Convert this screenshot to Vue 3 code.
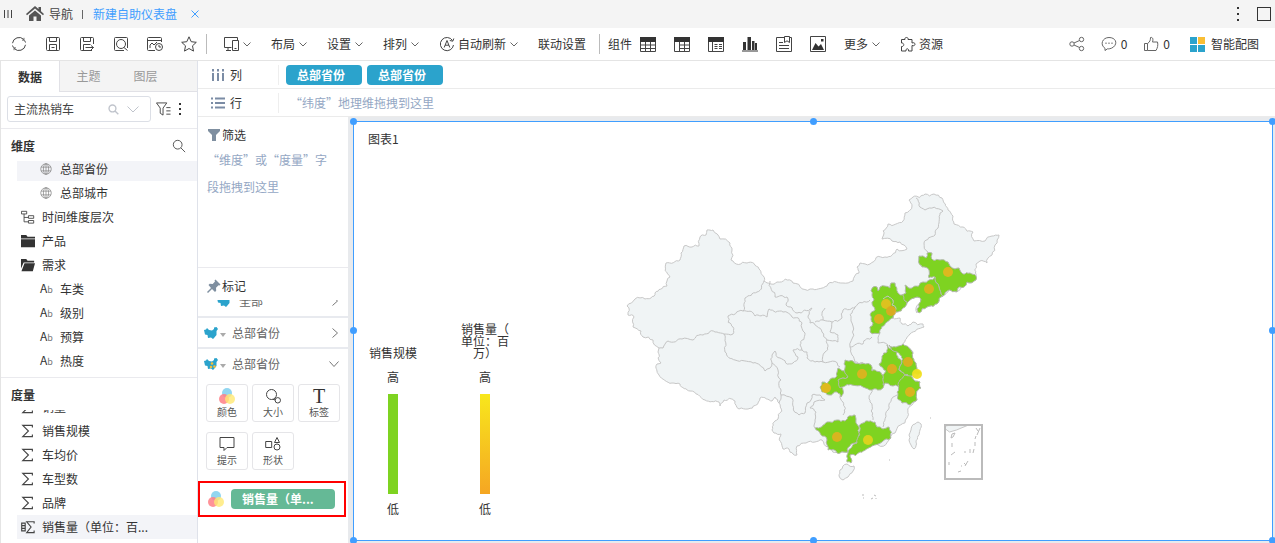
<script setup>
import { ref } from 'vue'

const dataset = ref('主流热销车')

const icons = {
  refresh: '<path d="M1.500 7.200A6.600 6.600 0 0 1 12.800 3.500M14.500 8.800A6.600 6.600 0 0 1 3.200 12.500M14.500 6.500L13.500 4.300M1.500 9.500L2.500 11.700"/><path d="M13 1.800v2.400h-2M3 14.200v-2.400h2" stroke-width=".7"/>',
  save: '<path d="M1.500 2.500a1 1 0 0 1 1-1h11a1 1 0 0 1 1 1v11a1 1 0 0 1-1 1h-11a1 1 0 0 1-1-1zM4.500 1.500v4h7v-4M4.500 14.500v-6h7v6M6.500 11.500h3"/>',
  saveAs: '<path d="M14.500 8V2.500a1 1 0 0 0-1-1h-11a1 1 0 0 0-1 1v11a1 1 0 0 0 1 1H13M4.500 1.500v4h7v-4M4.500 14.500v-6h7M6.500 11.500h8M12 9.500l2.500 2-2.500 2.500"/>',
  preview: '<path d="M11 14.500H2.500a1 1 0 0 1-1-1v-11a1 1 0 0 1 1-1h11a1 1 0 0 1 1 1V12"/><circle cx="8" cy="8" r="4.500"/><path d="M11 11.500l3.500 3"/>',
  history: '<path d="M14.500 6V2.500a1 1 0 0 0-1-1h-12a1 1 0 0 0-1 1v11a1 1 0 0 0 1 1H8M.5 4.500h14M3 12V9l2-2 2 2 3-3"/><circle cx="12" cy="11" r="3.500"/><path d="M12 9v2h2"/>',
  star: '<path d="M8 .8l2.200 4.900 5.100.6-3.800 3.500 1 5.300L8 12.500l-4.500 2.600 1-5.300L.7 6.300l5.100-.6z"/>',
  device: '<path d="M14.500 4V1.500h-13v10h7M3 14.500h5M5 11.500v3"/><path d="M9.500 4.500h6v10h-6zM11.500 12.500h2"/>',
  auto: '<path d="M13.500 4.500A6.600 6.600 0 1 0 14.500 9M14.800 2.500l-1 2.700-3-.7M5.200 11.500L8 4.500l2.800 7M6.200 9.200h3.600"/>',
  table: '<path d="M.5 1.500h15v14H.5zM.5 12.500h15M.5 9h15M5.500 5v10.500M10.500 5v10.500"/><path class="solid" d="M0 1h16v5H0z"/>',
  pivot: '<path d="M.5 1.500h15v14H.5zM5.500 9h10M5.500 12.500h10M5.500 5v10.500M10.500 5v10.500"/><path class="solid" d="M0 1h16v5H0z"/>',
  detail: '<path d="M.5 1.500h15v14H.5zM4.500 5v10.500M6.500 8.500h3M11 8.500h3M6.500 10.500h3M11 10.500h3M6.500 12.500h3M11 12.500h3"/><path class="solid" d="M0 1h16v5H0z"/>',
  bars: '<path class="solid" d="M1 6h3v8H1zM5.500 1h3.500v13H5.500zM10 5h2.500v9H10zM13 7h2v7h-2zM0 14.500h16v1H0z"/>',
  note: '<path d="M8 1.500H.5v14h15v-14H14M3 6.500h4M3 9.500h10M3 12.500h10M8.500.5h5v6L11 4.800 8.500 6.500z"/>',
  image: '<path d="M.5.500h15v15H.5z"/><path class="solid" d="M2 14l3.500-7 3 3.500L11 8l3 6zM11 3h2.500v2.500H11z"/>',
  puzzle: '<path d="M1.500 3.500H5C4 .8 9 .8 8 3.500h4V7c4-1.600 4 4 0 2.500v5.500H8.500c.6-3-3-3-2.500 0H1.500v-4.500c3 .4 3-3.900 0-3.500z"/>',
  share: '<circle cx="3" cy="8" r="2.200"/><circle cx="12.500" cy="3.500" r="2.200"/><circle cx="12.500" cy="12.500" r="2.200"/><path d="M5 7l5.500-2.500M5 9l5.500 2.500"/>',
  comment: '<path d="M4 14.500v-2.200C-1.500 8.500 1.500 1.500 8 1.500s9 5.500 4.500 9.500C10 13 7 13 6.500 12.800z"/><path d="M4.500 7.200h1M7.500 7.200h1M10.500 7.200h1" stroke-width="1.500"/>',
  thumb: '<path d="M1.500 7.500h3v7h-3zM4.500 7.500C7 6 7.500 4 7.500 1.500c2.500-.6 2.800 2 2 4.500h5c.8 3 0 6-1.500 8.500H4.500"/>',
  search: '<circle cx="6.500" cy="6.500" r="5"/><path d="M10.200 10.200l4.800 4.800"/>',
  funnelList: '<path d="M.5 1.500h11L7.500 7v7.500l-3-2V7zM11 6.500h4.500M11 10h4.500M11 13.500h4.500"/>',
  globe: '<circle cx="8" cy="8" r="7"/><ellipse cx="8" cy="8" rx="3.500" ry="7"/><path d="M1.500 5.500h13M1.500 10.500h13M8 1v14"/>',
  tree: '<path d="M.5 1.500h6v3h-6zM3.500 4.500v9h5M3.500 8.500h5M8.500 6.500h6v3h-6zM8.500 12h6v3h-6z"/>',
  folder: '<path class="solid" d="M0 1h6l1.500 2H16v2H0zM0 6h16v9H0z"/>',
  open: '<path class="solid" d="M0 1h6l1.500 2H15v2H3L0 12zM4 6h12l-2.500 9H.500z"/>',
  sigma: '<path d="M13 4V1.500h-11L8.500 8 2 14.500h11V12" stroke-width="1.300"/>',
  calc: '<path d="M15 4V2H6.500l5 6-5 6.500H15V12M.8 3.500h4v9h-4zM.8 6.500h4M.8 9.500h4" stroke-width="1.300"/>',
  size: '<circle cx="6.500" cy="6.500" r="5"/><circle cx="12.800" cy="12.300" r="2.700"/><path d="M8 11.300l2.500.7"/>',
  tooltip: '<path d="M1 1.500h14v10H8l-3 3v-3H1z"/>',
  shape: '<path d="M.7 5.500h6v6h-6zM12 1.500l2.500 5h-5z"/><circle cx="12" cy="11" r="3"/>'
}

const fileTools = [
  ['refresh', '刷新'], ['save', '保存'], ['saveAs', '另存'], ['preview', '预览'], ['history', '定时'], ['star', '收藏']
]
const menus = [
  { icon: 'device', caret: true, label: '' },
  { label: '布局', caret: true },
  { label: '设置', caret: true },
  { label: '排列', caret: true },
  { icon: 'auto', label: '自动刷新', caret: true },
  { label: '联动设置' }
]
const widgets = [
  ['table', '表格'], ['pivot', '交叉表'], ['detail', '明细表'], ['bars', '图表'], ['note', '文本'], ['image', '图片']
]
const dimensions = [
  { icon: 'globe', label: '总部省份', sub: true, active: true },
  { icon: 'globe', label: '总部城市', sub: true },
  { icon: 'tree', label: '时间维度层次' },
  { icon: 'folder', label: '产品' },
  { icon: 'open', label: '需求' },
  { label: '车类', sub: true },
  { label: '级别', sub: true },
  { label: '预算', sub: true },
  { label: '热度', sub: true }
]
const measures = [
  { icon: 'sigma', label: '销量' },
  { icon: 'sigma', label: '销售规模' },
  { icon: 'sigma', label: '车均价' },
  { icon: 'sigma', label: '车型数' },
  { icon: 'sigma', label: '品牌' },
  { icon: 'calc', label: '销售量（单位：百...', active: true }
]
const legends = [
  { title: '销售规模', kind: 'green' },
  { title: '销售量（单位：百万）', kind: 'warm' }
]
const handles = ['nw', 'n', 'ne', 'w', 'e', 'sw', 's', 'se']

/* Splits a border segment into small irregular steps; the result does not depend on the direction. */
function split(a, b, depth) {
  const len = Math.hypot(b[0] - a[0], b[1] - a[1])
  if (depth === 0 || len < 3) return [b]
  const [p, q] = a[0] < b[0] || (a[0] === b[0] && a[1] < b[1]) ? [a, b] : [b, a]
  const s = Math.sin(p[0] * 12.9 + p[1] * 78.2 + q[0] * 37.7 + q[1] * 9.1) * 4375.5
  const k = (s - Math.floor(s) - 0.5) * 0.42
  const m = [(p[0] + q[0]) / 2 - (q[1] - p[1]) * k, (p[1] + q[1]) / 2 + (q[0] - p[0]) * k]
  return [...split(a, m, depth - 1), ...split(m, b, depth - 1)]
}
function trace(text, close) {
  const pts = text.split(' ').map(p => p.split(',').map(Number))
  if (close) pts.push(pts[0])
  const out = [pts[0]]
  for (let i = 1; i < pts.length; i++) out.push(...split(pts[i - 1], pts[i], 3))
  return 'M' + out.map(p => p[0].toFixed(1) + ' ' + p[1].toFixed(1)).join('L') + (close ? 'Z' : '')
}

const land = [
  '764,281 759,269 747,263 731,260 732,250 730,243 720,239 713,230 707,230 706,235 700,237 699,246 692,247 684,246 681,253 680,260 666,263 670,277 667,286 655,293 645,299 635,299 627,306 628,315 634,317 633,327 641,331 643,337 653,340 659,348 658,352 661,363 657,364 659,375 672,383 680,384 690,391 705,400 719,402 720,406 724,400 735,401 739,409 748,409 760,398 772,401 775,397 779,403 778,419 772,430 774,433 781,434 783,449 789,449 793,454 797,455 797,446 806,443 815,442 822,440 828,447 840,453 848,452 860,450 870,445 889,440 891,436 895,433 907,418 912,405 917,400 921,388 920,382 912,377 921,373 916,365 913,353 903,344 910,334 924,327 923,324 913,322 908,326 902,324 900,318 893,318 896,313 903,308 907,303 917,297 921,299 916,308 917,313 927,307 938,303 943,296 949,289 958,291 967,282 973,282 976,276 976,264 980,261 987,263 992,255 995,245 999,235 992,236 985,241 974,241 973,232 963,227 954,224 948,210 942,198 934,194 925,194 913,197 909,200 912,206 905,213 903,221 888,224 882,239 892,241 900,242 904,245 907,249 897,249 885,257 870,264 860,263 857,267 859,273 853,281 843,283 827,286 813,289 793,283 777,282',
  '840,470 847,464 854,466 853,471 848,477 843,480 839,476',
  '915,424 918,422 921,424 920,430 918,436 916,442 914,449 911,445 909,440 909,435 911,430'
].map(t => trace(t, true))

const borders = [
  '659,348 663,348 668,341 682,339 693,340 703,335 717,332 724,334 733,334 733,327 728,316 743,311 745,298 757,292 764,281',
  '743,311 755,316 767,317 769,309 783,312 792,317 802,323 805,333 800,345 802,350 793,350 798,357 793,363 780,358 775,351 772,355 772,363',
  '724,334 725,352 735,360 753,363 765,371 772,363',
  '772,363 778,370 781,380 781,395 779,403',
  '802,350 807,352 807,358 815,362 823,362',
  '770,281 775,297 787,297 786,305 797,313 812,308 808,316 810,323 822,332 827,340 838,342 838,335 830,332 832,322 823,320 825,308',
  '815,322 823,320',
  '832,322 842,318 843,310 855,307 870,300',
  '855,307 852,323 850,347 863,344 872,337',
  '850,347 852,355 855,362 870,367 880,372',
  '827,340 825,352 823,362 840,367',
  '781,395 792,398 799,415 805,413 807,403 812,395 820,395 825,400 814,402 810,408 816,412 815,428',
  '843,388 843,402 843,415',
  '872,390 870,402 873,420',
  '897,395 888,410 883,427',
  '880,333 878,343 888,345',
  '916,198 925,210 943,211 939,223 935,235 924,243 928,252'
].map(t => trace(t, false))

const provinces = [
  '919,256 926,258 927,253 932,253 933,260 940,260 948,262 950,266 955,269 959,268 963,274 970,273 976,276 976,280 973,282 967,282 964,287 958,288 957,292 949,290 943,296 939,287 935,277 929,278 929,270 922,267',
  '935,277 939,287 943,296 938,303 927,307 919,313 917,309 921,299 917,297 907,303 902,295 906,293 905,285 912,288 923,282 929,280',
  '873,287 877,287 878,291 880,287 890,288 891,283 895,283 898,293 903,295 907,302 903,308 898,312 895,311 893,318 887,322 880,333 870,332 873,323 870,315 875,310 872,302 874,299 872,295',
  '822,382 827,384 832,378 837,376 838,368 847,370 848,377 838,380 843,390 841,397 837,392 829,395 822,392 820,387',
  '845,360 853,361 860,364 871,365 872,371 883,375 883,388 872,390 863,387 852,385 840,388 838,380 848,377 845,368',
  '887,345 891,349 897,352 898,358 902,362 899,370 905,375 903,387 893,386 883,385 883,375 886,371 879,364 882,356 887,352',
  '889,345 896,347 903,344 909,348 913,353 916,365 921,373 910,377 899,370 902,362 897,352',
  '905,375 912,377 920,382 921,388 917,400 910,405 902,403 897,392 900,380',
  '815,428 827,422 837,420 845,421 849,416 855,415 856,423 859,427 858,440 848,452 840,453 828,450 827,440',
  '863,423 875,422 877,427 889,427 891,438 882,442 872,446 860,452 850,455 851,463 847,462 847,455 857,443 859,426'
].map(t => trace(t, true))
const cityBorder = trace('883,299 888,296 893,300 892,305 896,308 895,315', false)

const points = [
  [948, 272, '#e3b71f'], [929, 289, '#dfb11f'], [886, 304, '#e3c11f'], [891, 311, '#dfa820'], [879, 319, '#dfb11f'],
  [908, 362, '#dfae20'], [892, 369, '#dfae20'], [917, 374, '#f2e01e'], [910, 392, '#dfb31f'], [862, 374, '#dfb31f'],
  [826, 388, '#e6b81f'], [837, 437, '#dfb31f'], [868, 440, '#e1d31d']
]
</script>

<template>
  <div class="app">
    <header class="tabs">
      <svg class="grip" viewBox="0 0 10 10"><path d="M1.500 1v8M5 1v8M8.500 1v8" /></svg>
      <a class="nav" href="#">
        <svg viewBox="0 0 18 16"><path d="M9 0L0 8l1 1.200L9 2.500l8 6.700L18 8l-3-2.700V1h-2.500v2zM3 9.500V15h4.500v-4.500h3V15H15V9.500L9 4.500z" /></svg>
        导航
      </a>
      <span class="bar" />
      <a class="current" href="#">新建自助仪表盘</a>
      <button class="close" aria-label="关闭"><svg viewBox="0 0 8 8"><path d="M.5.500l7 7M7.500.500l-7 7" /></svg></button>
      <button class="more" aria-label="更多操作"><i /><i /><i /></button>
      <button class="maximise" aria-label="最大化" />
    </header>

    <nav class="toolbar">
      <div class="tools">
        <button v-for="t in fileTools" :key="t[0]" :aria-label="t[1]"><svg class="ico" viewBox="0 0 16 16" v-html="icons[t[0]]" /></button>
      </div>
      <span class="sep" />
      <div class="menus">
        <button v-for="m in menus" :key="m.label" :aria-label="m.label || '设备'">
          <svg v-if="m.icon" class="ico" viewBox="0 0 16 16" v-html="icons[m.icon]" />
          <span v-if="m.label">{{ m.label }}</span>
          <svg v-if="m.caret" class="caret" viewBox="0 0 8 5"><path d="M.5.500L4 4 7.500.500" /></svg>
        </button>
      </div>
      <span class="sep" />
      <span class="caption">组件</span>
      <div class="tools">
        <button v-for="t in widgets" :key="t[0]" :aria-label="t[1]"><svg class="ico" viewBox="0 0 16 16" v-html="icons[t[0]]" /></button>
      </div>
      <div class="menus extra">
        <button><span>更多</span><svg class="caret" viewBox="0 0 8 5"><path d="M.5.500L4 4 7.500.500" /></svg></button>
        <button><svg class="ico" viewBox="0 0 16 16" v-html="icons.puzzle" /><span>资源</span></button>
      </div>
      <div class="social">
        <button aria-label="分享"><svg class="ico" viewBox="0 0 16 16" v-html="icons.share" /></button>
        <button><svg class="ico" viewBox="0 0 16 16" v-html="icons.comment" /><span>0</span></button>
        <button><svg class="ico" viewBox="0 0 16 16" v-html="icons.thumb" /><span>0</span></button>
      </div>
      <button class="smart"><span class="tiles"><i /><i /><i /><i /></span>智能配图</button>
    </nav>

    <div class="work">
      <aside class="data">
        <div class="switch">
          <button class="on">数据</button><button>主题</button><button>图层</button>
        </div>
        <div class="finder">
          <label class="box">
            <input v-model="dataset" type="text" aria-label="数据集">
            <svg class="lens" viewBox="0 0 16 16" v-html="icons.search" />
            <svg class="drop" viewBox="0 0 12 7"><path d="M.5.500L6 6 11.500.500" /></svg>
          </label>
          <button aria-label="筛选字段"><svg class="ico" viewBox="0 0 16 16" v-html="icons.funnelList" /></button>
          <button class="more" aria-label="更多"><i /><i /><i /></button>
        </div>
        <section class="fields dims">
          <h2>维度 <button aria-label="搜索"><svg class="ico" viewBox="0 0 16 16" v-html="icons.search" /></button></h2>
          <ul>
            <li v-for="d in dimensions" :key="d.label" :class="{ sub: d.sub, active: d.active }">
              <svg v-if="d.icon" :class="d.icon" viewBox="0 0 16 16" v-html="icons[d.icon]" />
              <span v-else class="ab">A<small>b</small></span>
              {{ d.label }}
            </li>
          </ul>
        </section>
        <section class="fields meas">
          <h2>度量</h2>
          <ul>
            <li v-for="d in measures" :key="d.label" :class="{ active: d.active }">
              <svg :class="d.icon" viewBox="0 0 16 16" v-html="icons[d.icon]" />
              {{ d.label }}
            </li>
          </ul>
        </section>
      </aside>

      <main class="board">
        <div class="shelf">
          <div class="name"><svg viewBox="0 0 14 12"><path d="M2 4v8M7 4v8M12 4v8M2 0v2.500M7 0v2.500M12 0v2.500" /></svg>列</div>
          <span class="chip">总部省份</span><span class="chip">总部省份</span>
        </div>
        <div class="shelf">
          <div class="name"><svg viewBox="0 0 14 12"><path d="M4 1.500h10M4 6h10M4 10.500h10M0 1.500h2M0 6h2M0 10.500h2" /></svg>行</div>
          <span class="hint">“纬度”地理维拖拽到这里</span>
        </div>
        <div class="stage">
          <div class="config">
            <section class="filter">
              <h3><svg viewBox="0 0 14 14"><path d="M1 1h12v2L9 7v6H5V7L1 3z" /></svg>筛选</h3>
              <p>“维度”或“度量”字段拖拽到这里</p>
            </section>
            <section class="marks">
              <h3><svg viewBox="0 0 14 14"><path d="M8.500.500l5 5-1 1-1-.3-2.500 2.500.2 3-1.200 1.200L5 10l-4 4-1-1 4-4L1.500 6l1.200-1.200 3 .2L8 2.500l-.5-1z" /></svg>标记</h3>
              <div class="clip">
                <div class="layer">
                  <svg class="cn" viewBox="0 0 14 12"><path d="M0 3l2-.5 1-1.500 2 2 3 .5 2-1.500V.500L12.500 0 14 2l-1.500 2v4L10 11l-1 1-2-1.500-3 .5L3.500 8 1 7.500z" /></svg>
                  <span>全部</span>
                  <svg class="arrow" viewBox="0 0 6 10"><path d="M.5.500L5.500 5 .5 9.500" /></svg>
                </div>
              </div>
              <div class="layer line">
                <svg class="cn" viewBox="0 0 14 12"><path d="M0 3l2-.5 1-1.500 2 2 3 .5 2-1.500V.500L12.500 0 14 2l-1.500 2v4L10 11l-1 1-2-1.500-3 .5L3.500 8 1 7.500z" /></svg>
                <i class="tri" /><span>总部省份</span>
                <svg class="arrow" viewBox="0 0 6 10"><path d="M.5.500L5.500 5 .5 9.500" /></svg>
              </div>
              <div class="layer line">
                <svg class="cn" viewBox="0 0 14 12"><path d="M0 3l2-.5 1-1.500 2 2 3 .5 2-1.500V.500L12.500 0 14 2l-1.500 2v4L10 11l-1 1-2-1.500-3 .5L3.500 8 1 7.500z" /><g class="spots"><circle cx="8" cy="5.500" r="1.300" /><circle cx="10.500" cy="8.500" r="1.300" /><circle cx="7" cy="9" r="1.200" /></g></svg>
                <i class="tri" /><span>总部省份</span>
                <svg class="arrow wide" viewBox="0 0 10 6"><path d="M.5.500L5 5.500 9.500.500" /></svg>
              </div>
              <div class="props">
                <button><svg class="rgb" viewBox="0 0 16 16"><circle class="b" cx="8" cy="5" r="5" /><circle class="r" cx="5" cy="11" r="5" /><circle class="y" cx="11" cy="11" r="5" /></svg>颜色</button>
                <button><svg class="ico" viewBox="0 0 16 16" v-html="icons.size" />大小</button>
                <button><b class="tee">T</b>标签</button>
                <button><svg class="ico" viewBox="0 0 16 16" v-html="icons.tooltip" />提示</button>
                <button><svg class="ico" viewBox="0 0 16 16" v-html="icons.shape" />形状</button>
              </div>
              <div class="bound">
                <svg class="rgb" viewBox="0 0 16 16"><circle class="b" cx="8" cy="5" r="5" /><circle class="r" cx="5" cy="11" r="5" /><circle class="y" cx="11" cy="11" r="5" /></svg>
                <span class="chip green">销售量（单...</span>
              </div>
            </section>
          </div>

          <div class="canvas">
            <article class="chart">
              <i v-for="h in handles" :key="h" class="handle" :class="h" />
              <h1>图表1</h1>
              <div class="plot">
                <div class="legends">
                  <div v-for="l in legends" :key="l.title" class="legend">
                    <div class="title">{{ l.title }}</div>
                    <span>高</span>
                    <div class="ramp" :class="l.kind" />
                    <span>低</span>
                  </div>
                </div>
                <svg class="map" viewBox="620 185 390 325">
                  <path v-for="(d, i) in land" :key="'l' + i" class="land" :d="d" />
                  <path v-for="(d, i) in borders" :key="'b' + i" class="border" :d="d" />
                  <path v-for="(d, i) in provinces" :key="'p' + i" class="hot" :d="d" />
                  <path class="border" :d="cityBorder" />
                  <path class="land" d="M945.500 426l5-1h18l-12 5-7 2-4-3z" />
                  <rect class="inset" x="945" y="425" width="37" height="54" />
                  <path class="isles" d="M952 434l3-1-2 4-2 1zM976 428l2 3M980 428l-3 7M976 436l-1 3M975 442v4M974 449l-1 4M970 449v4M952 443v4M951 455l4-3M949 462v3M961 466h1M964 463l2 2M968 461l-3 5M961 471l-3 1M964 452h2M930 418h1M889 460h1M862 495h2M863 498h1M871 499l2-1M874 495l2 1M876 498v1" />
                  <circle v-for="(p, i) in points" :key="'c' + i" class="point" :cx="p[0]" :cy="p[1]" r="5" :fill="p[2]" fill-opacity=".93" />
                </svg>
              </div>
            </article>
          </div>
        </div>
      </main>
    </div>
  </div>
</template>

<style>
body { background: #fff; }
</style>

<style scoped>
.app { height: 100vh; display: flex; flex-direction: column; overflow: hidden; color: #333; font: 12px/16px "Noto Sans CJK SC", "Noto Sans", sans-serif; }
.app * { box-sizing: border-box; }
button { border: 0; padding: 0; margin: 0; background: none; color: inherit; font: inherit; display: flex; align-items: center; cursor: pointer; }
a { color: inherit; text-decoration: none; }
h1, h2, h3, p, ul { margin: 0; padding: 0; font-size: 12px; font-weight: 400; list-style: none; }
svg { display: block; flex: none; }
.ico { width: 16px; height: 16px; }
svg { fill: none; stroke: #444; stroke-width: 1; }
svg :deep(.solid) { fill: #333; stroke: none; }

.tabs { flex: none; height: 28px; display: flex; align-items: center; background: #f4f4f4; padding: 0 4px 0 3px; }
.grip { width: 10px; height: 10px; }
.nav { display: flex; align-items: center; gap: 5px; margin-left: 13px; color: #444; }
.nav svg { width: 18px; height: 16px; fill: #555; stroke: none; }
.bar { width: 1px; height: 9px; background: #666; margin: 0 10px 0 9px; }
.current { color: #409eff; }
.close { margin-left: 14px; }
.close svg { width: 8px; height: 8px; stroke: #409eff; }
.more { flex-direction: column; gap: 4px; }
.more i { width: 2px; height: 2px; background: #333; }
.tabs .more { margin-left: auto; margin-right: 18px; }
.maximise { width: 14px; height: 14px; border: 1px solid #333; }

.toolbar { flex: none; height: 33px; display: flex; align-items: center; border-bottom: 1px solid #e4e4e4; padding: 0 16px 0 11px; white-space: nowrap; }
.tools { display: flex; gap: 18px; }
.sep { width: 1px; height: 20px; background: #bbb; margin: 0 8px 0 9px; }
.menus { display: flex; gap: 20px; margin: 0 4px 0 8px; }
.menus button { gap: 3px; }
.caret { width: 8px; height: 5px; stroke: #666; margin-left: 1px; }
.caption { margin-right: 8px; }
.menus.extra { margin-left: 18px; }
.social { display: flex; gap: 16px; margin-left: auto; }
.social button { gap: 4px; }
.social svg { stroke: #666; }
.smart { margin-left: 20px; gap: 6px; }
.tiles { display: grid; grid-template-columns: 7px 7px; grid-auto-rows: 7px; gap: 1px; }
.tiles i { background: #2ba3cc; }
.tiles i:nth-child(2) { background: #f9be35; }

.work { flex: 1; min-height: 0; display: flex; }
.data { flex: none; width: 198px; display: flex; flex-direction: column; border-left: 1px solid #e4e4e4; border-right: 1px solid #dfe2ea; }
.switch { flex: none; display: flex; height: 31px; background: #f4f4f4; border-bottom: 1px solid #e1e1e6; }
.switch button { width: 57px; justify-content: center; color: #999; }
.switch .on { width: 59px; height: 31px; background: #fff; border-right: 1px solid #e1e1e6; color: #333; font-weight: 700; }
.finder { flex: none; display: flex; align-items: center; height: 37px; padding: 0 0 2px 6px; border-bottom: 1px solid #eaeaee; }
.box { width: 144px; height: 26px; display: flex; align-items: center; border: 1px solid #dcdfe6; border-radius: 3px; padding: 0 11px 0 6px; margin-right: 5px; }
input { flex: 1; min-width: 0; border: 0; outline: 0; padding: 0; background: none; font: inherit; color: #444; }
.lens { width: 11px; height: 11px; stroke: #c0c4cc; stroke-width: 2; }
.drop { width: 12px; height: 7px; stroke: #c0c4cc; margin-left: 8px; }
.finder .more { margin-left: 8px; gap: 3px; }
.finder .ico { width: 15px; }
.fields { display: flex; flex-direction: column; }
.fields h2 { flex: none; height: 32px; display: flex; align-items: center; justify-content: space-between; padding: 2px 11px 0 10px; font-weight: 700; }
.fields h2 .ico { width: 14px; height: 14px; }
.fields ul { min-height: 0; display: flex; flex-direction: column; justify-content: flex-end; overflow: hidden; padding-left: 16px; }
.dims { flex: none; border-bottom: 1px solid #eaeaee; padding-bottom: 4px; }
.dims ul { height: 212px; }
.meas { flex: 1; min-height: 0; padding-bottom: 4px; }
.meas ul { flex: 1; }
li { flex: none; height: 24px; display: flex; align-items: center; gap: 7px; padding-left: 4px; white-space: nowrap; }
li.active { background: #f3f4f8; }
li svg { width: 14px; height: 14px; }
li.sub { padding-left: 23px; }
li .globe { width: 12px; height: 12px; stroke: #888; }
li.sub .globe { margin-right: 1px; }
.ab { width: 13px; }
.ab small { font-size: 9px; color: #777; }

.board { flex: 1; min-width: 0; display: flex; flex-direction: column; }
.shelf { flex: none; height: 28px; display: flex; align-items: center; gap: 5px; border-bottom: 1px solid #ebebeb; }
.name { width: 81px; height: 20px; display: flex; align-items: center; gap: 5px; padding-left: 13px; border-right: 1px solid #eee; margin-right: 2px; }
.name svg { width: 14px; height: 12px; stroke: #7b8ca5; stroke-width: 2; }
.chip { width: 76px; height: 20px; line-height: 20px; border-radius: 4px; background: #2ba3cc; color: #fff; font-weight: 700; padding-left: 11px; white-space: nowrap; }
.hint, .filter p { color: #94a7c4; text-spacing-trim: space-all; }
.hint { padding-left: 4px; }
.stage { flex: 1; min-height: 0; display: flex; }
.config { flex: none; width: 150px; display: flex; flex-direction: column; }
.filter { height: 151px; border-bottom: 1px solid #eaeaee; padding: 10px 16px 0 9px; }
h3 { display: flex; align-items: center; gap: 1px; }
h3 svg { width: 14px; height: 14px; fill: #7f8fa0; stroke: none; }
.filter p { line-height: 27px; padding-top: 3px; }
.marks { padding-top: 10px; }
.marks h3 { padding-left: 9px; }
.clip { height: 16px; margin-top: 6px; padding-bottom: 5px; display: flex; flex-direction: column; justify-content: flex-end; overflow: hidden; }
.clip .layer { height: 20px; padding-left: 19px; }
.clip .layer span { margin-left: 8px; }
.layer { flex: none; display: flex; align-items: center; padding: 0 10px 0 6px; color: #666; }
.line { height: 31px; border-top: 2px solid #e8eaef; }
.cn { width: 14px; height: 12px; fill: #2ba3cc; stroke: none; }
.spots { fill: #f9be35; }
.tri { border: 3px solid transparent; border-top: 4px solid #aaa; border-bottom: 0; margin: 4px 6px 0 2px; }
.arrow { width: 6px; height: 10px; stroke: #777; margin-left: auto; }
.arrow.wide { width: 10px; height: 6px; margin-right: -1px; }
.props { display: grid; grid-template-columns: repeat(3, 42px); gap: 10px 4px; padding: 6px 8px 0 8px; }
.props button { height: 38px; flex-direction: column; justify-content: center; gap: 1px; border: 1px solid #e5e5e8; border-radius: 3px; font-size: 10px; line-height: 14px; color: #555; }
.tee { font: 20px/16px "Liberation Serif", serif; color: #333; height: 16px; }
.rgb { width: 16px; height: 16px; stroke: none; }
.rgb .b { fill: #92d6f0; }
.rgb .r { fill: #ff7f86; fill-opacity: .85; }
.rgb .y { fill: #ffe973; fill-opacity: .8; }
.bound { height: 36px; margin: 11px 2px 0 0; border: 2px solid #f00; display: flex; align-items: center; gap: 7px; padding-left: 8px; }
.chip.green { width: 104px; background: #65b996; }

.canvas { flex: 1; min-width: 0; background: #e8eaed; padding: 4px 2px 2px 5px; display: flex; }
.chart { flex: 1; min-width: 0; position: relative; background: #fff; border: 1px solid #409eff; }
.handle { position: absolute; width: 7px; height: 7px; border-radius: 50%; background: #409eff; margin: -4px; }
.n, .nw, .ne { top: 0; }
.s, .sw, .se { top: 100%; margin-top: -3px; }
.w, .e { top: 50%; }
.nw, .w, .sw { left: 0; }
.ne, .e, .se { left: 100%; margin-left: -3px; }
.n, .s { left: 50%; margin-left: -3px; }
h1 { padding: 9px 14px 0; }
.plot { display: flex; align-items: flex-start; padding: 38px 0 0 15px; }
.legends { display: flex; align-items: flex-end; gap: 44px; margin-top: 138px; }
.legend { width: 48px; display: flex; flex-direction: column; align-items: center; }
.title { line-height: 12px; text-align: center; margin-bottom: 10px; line-break: anywhere; word-break: break-all; }
.ramp { width: 10px; height: 100px; margin: 9px 0 7px; background: #7ed321; }
.ramp.warm { background: linear-gradient(#f8e71c, #f5a623); }
.map { width: 390px; height: 325px; margin-left: 111px; }
.land { fill: #f0f4f5; stroke: #c8c8c8; }
.border { stroke: #c4c4c4; }
.hot { fill: #7ed321; stroke: #b1b9a8; }
.inset { stroke: #bbb; stroke-width: 2; }
.isles { stroke: #bbb; }
.point { stroke: none; }
</style>
